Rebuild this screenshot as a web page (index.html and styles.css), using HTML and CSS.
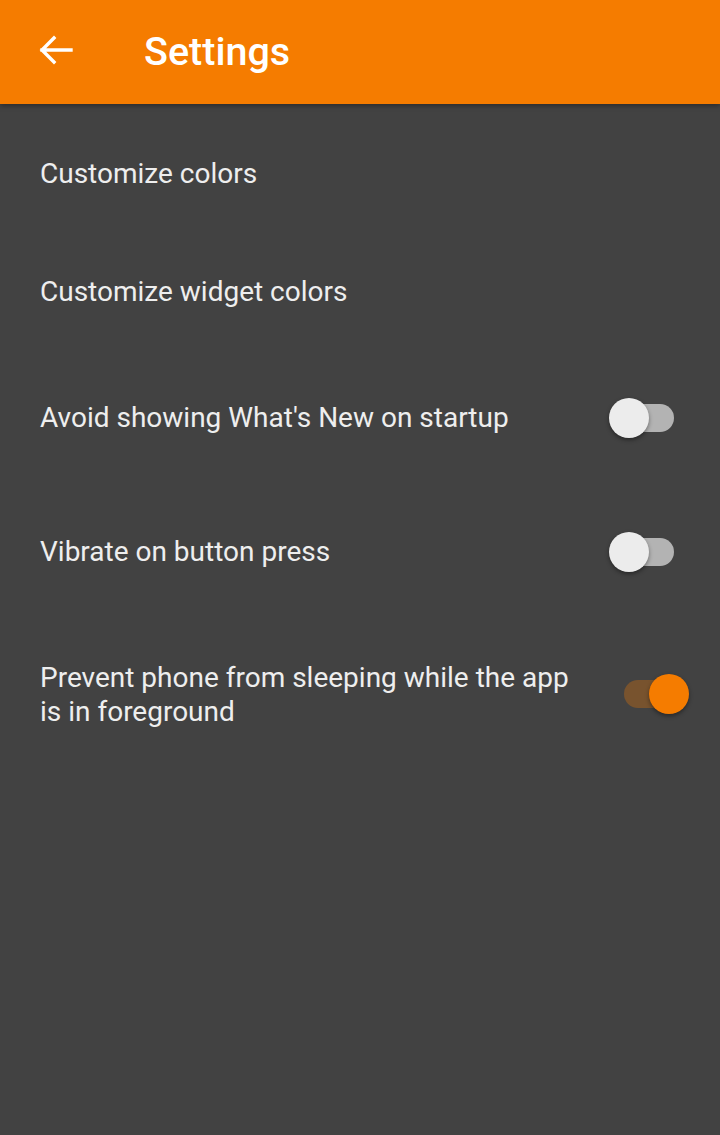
FILE: index.html
```html
<!DOCTYPE html>
<html lang="en">
<head>
    <meta charset="UTF-8">
    <meta name="viewport" content="width=device-width, initial-scale=1.0">
    <title>Settings</title>
    <link rel="stylesheet" href="styles.css">
</head>
<body>
    <!-- Toolbar -->
    <div class="toolbar">
        <svg class="back" width="34" height="30" viewBox="0 0 34 30">
            <path d="M32 15 H3 M15 3 L3 15 L15 27" fill="none" stroke="white" stroke-width="3.4" stroke-linecap="square"/>
        </svg>
        <h1>Settings</h1>
    </div>

    <!-- Preferences -->
    <div class="list">
        <div class="row row-1"><span class="label">Customize colors</span></div>
        <div class="row row-2"><span class="label">Customize widget colors</span></div>
        <div class="row row-3">
            <span class="label">Avoid showing What's New on startup</span>
            <div class="switch"><div class="track"></div><div class="thumb"></div></div>
        </div>
        <div class="row row-4">
            <span class="label">Vibrate on button press</span>
            <div class="switch"><div class="track"></div><div class="thumb"></div></div>
        </div>
        <div class="row row-5">
            <span class="label">Prevent phone from sleeping while the app is in foreground</span>
            <div class="switch on"><div class="track"></div><div class="thumb"></div></div>
        </div>
    </div>
</body>
</html>
```

FILE: styles.css
```css
body {
    margin: 0;
    background-color: #424242;
    font-family: Roboto, "Noto Sans", sans-serif;
    height: 1135px;
    overflow: hidden;
}

/* Toolbar */
.toolbar {
    height: 104px;
    background-color: #f57c00;
    display: flex;
    align-items: center;
    box-shadow: 0 2px 5px rgba(0, 0, 0, 0.35);
    position: relative;
}

.toolbar .back {
    margin-left: 39px;
    margin-right: 71px;
    margin-top: -4px;
}

.toolbar h1 {
    margin: 0;
    margin-top: -2px;
    color: white;
    font-size: 39.5px;
    font-weight: 500;
}

/* List */
.list {
    margin-top: 11px;
    display: flex;
    flex-direction: column;
}

.row {
    display: flex;
    align-items: center;
    padding: 0 31px 0 40px;
    gap: 38px;
}

.row-1, .row-2 { height: 118px; }
.row-3, .row-4 { height: 134px; }
.row-5 { height: 152px; }

.label {
    flex: 1;
    color: #eeeeee;
    font-size: 28px;
    line-height: 34px;
}

/* Switch */
.switch {
    width: 80px;
    height: 40px;
    position: relative;
    flex-shrink: 0;
}

.row-5 .switch {
    margin-top: -3px;
}

.track {
    position: absolute;
    left: 15px;
    top: 6px;
    width: 50px;
    height: 28px;
    border-radius: 14px;
    background-color: #b3b3b3;
}

.thumb {
    position: absolute;
    left: 0;
    top: 0;
    width: 40px;
    height: 40px;
    border-radius: 50%;
    background-color: #ececec;
    box-shadow: 0 2px 4px rgba(0, 0, 0, 0.4);
}

.switch.on .track {
    background-color: #78532e;
}

.switch.on .thumb {
    left: 40px;
    background-color: #f57c00;
}
```
